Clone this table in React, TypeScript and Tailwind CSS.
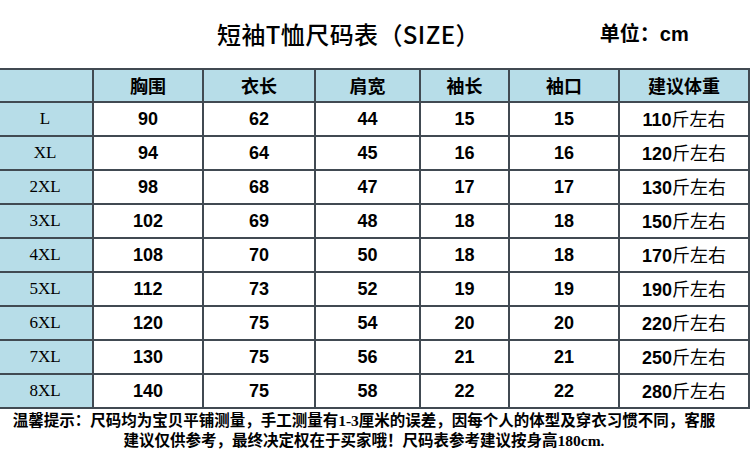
const rows = [
  ["L", "90", "62", "44", "15", "15", "110"],
  ["XL", "94", "64", "45", "16", "16", "120"],
  ["2XL", "98", "68", "47", "17", "17", "130"],
  ["3XL", "102", "69", "48", "18", "18", "150"],
  ["4XL", "108", "70", "50", "18", "18", "170"],
  ["5XL", "112", "73", "52", "19", "19", "190"],
  ["6XL", "120", "75", "54", "20", "20", "220"],
  ["7XL", "130", "75", "56", "21", "21", "250"],
  ["8XL", "140", "75", "58", "22", "22", "280"],
]

const heads = ["胸围", "衣长", "肩宽", "袖长", "袖口", "建议体重"]
const widths = [96, 110, 112, 105, 89, 110, 130]

const cell = "border-2 border-[#414a52] p-0 text-center align-middle"
const sans = "font-['Liberation_Sans','Noto_Sans_CJK_SC',sans-serif]"
const cjk = "font-['Noto_Sans_CJK_SC',sans-serif]"

export default function App() {
  return (
    <div className="h-[457px] w-[750px] overflow-hidden bg-white text-black">
      <div className="flex h-[68px] items-center">
        <div className={`ml-[217px] text-[24px] leading-none font-medium tracking-[0.4px] ${cjk}`}>
          短袖T恤尺码表（SIZE）
        </div>
        <div className={`ml-[120px] text-[20px] leading-none font-bold ${sans}`}>
          单位：cm
        </div>
      </div>

      <table className="-ml-[4px] table-fixed border-collapse">
        <colgroup>
          {widths.map((w, i) => (
            <col key={i} style={{ width: w }} />
          ))}
        </colgroup>
        <thead>
          <tr className="h-[33px] bg-[#b7dde8]">
            <th className={cell}></th>
            {heads.map((h) => (
              <th key={h} className={`${cell} text-[18px] font-bold ${cjk}`}>
                {h}
              </th>
            ))}
          </tr>
        </thead>
        <tbody>
          {rows.map((r) => (
            <tr key={r[0]} className="h-[34px]">
              <td className={`${cell} bg-[#b7dde8] font-['Liberation_Serif',serif] text-[17px]`}>
                {r[0]}
              </td>
              {r.slice(1, 6).map((v, i) => (
                <td key={i} className={`${cell} ${sans} text-[18px] font-bold`}>
                  {v}
                </td>
              ))}
              <td className={`${cell} ${sans} text-[18px]`}>
                <span className="font-bold">{r[6]}</span>
                <span className={cjk}>斤左右</span>
              </td>
            </tr>
          ))}
        </tbody>
      </table>

      <div className="mt-[2px] pr-[22px] text-center text-[15.5px] leading-[20px] font-bold font-['Liberation_Serif','Noto_Sans_CJK_SC',serif]">
        <p>
          温馨提示：尺码均为宝贝平铺测量，手工测量有1-3厘米的误差，因每个人的体型及穿衣习惯不同，客服
        </p>
        <p>建议仅供参考，最终决定权在于买家哦！尺码表参考建议按身高180cm.</p>
      </div>
    </div>
  )
}
